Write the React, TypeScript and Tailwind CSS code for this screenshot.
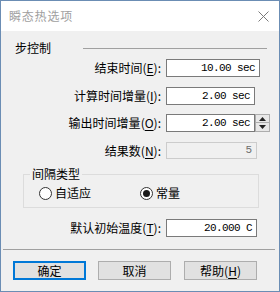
import React from "react";

const cjk = { fontFamily: '"Noto Sans CJK SC", "Noto Sans", sans-serif' };
const mono = { fontFamily: '"Liberation Mono", "DejaVu Sans Mono", monospace' };

function Label({ text, k }: { text: string; k: string }) {
  return (
    <div className="w-[160px] flex justify-end items-center text-[12px] leading-[16px] text-black">
      <span>{text}(</span>
      <span className="underline underline-offset-[2px]">{k}</span>
      <span>):</span>
    </div>
  );
}

function Field({ value, w }: { value: string; w: string }) {
  return (
    <div
      className={`${w} h-[18px] ml-[5px] border border-[#7a7a7a] bg-white flex items-center justify-end pr-[4px] text-[11px] tracking-[-0.6px] text-black`}
      style={mono}
    >
      {value}
    </div>
  );
}

function Radio({ checked, label }: { checked: boolean; label: string }) {
  return (
    <div className="flex items-center">
      <div className="w-[13px] h-[13px] rounded-full border border-[#333333] bg-white flex items-center justify-center">
        {checked && <div className="w-[7px] h-[7px] rounded-full bg-[#1a1a1a]" />}
      </div>
      <span className="ml-[3px] text-[12px] leading-[16px] text-black">{label}</span>
    </div>
  );
}

function Btn({ children, primary }: { children: React.ReactNode; primary?: boolean }) {
  return (
    <div
      className={`w-[73px] h-[19px] flex items-center justify-center bg-[#e1e1e1] text-[12px] leading-[16px] text-black ${
        primary ? "border-2 border-[#0078d7]" : "border border-[#adadad]"
      }`}
    >
      {children}
    </div>
  );
}

export default function App() {
  return (
    <div
      className="w-[280px] h-[292px] border border-[#6b8db4] flex flex-col bg-[#f0f0f0] overflow-hidden"
      style={cjk}
    >
      {/* title bar */}
      <div className="h-[30px] bg-white flex items-center justify-between pl-[8px] pr-[10px] shrink-0">
        <span className="text-[12px] leading-[16px] text-[#a0a0a0] tracking-[0.8px]">瞬态热选项</span>
        <svg width="11" height="11" viewBox="0 0 11 11">
          <path d="M0.5 0.5 L10.5 10.5 M10.5 0.5 L0.5 10.5" stroke="#7a7a7a" strokeWidth="1" />
        </svg>
      </div>

      {/* body */}
      <div className="flex flex-col pt-[9px]">
        <div className="h-[16px] flex items-center pl-[14px] pr-[12px]">
          <span className="text-[12px] leading-[16px] text-black">步控制</span>
          <div className="flex-1 ml-[32px] h-px bg-[#a0a0a0]" />
        </div>

        <div className="flex items-center mt-[3px]">
          <Label text="结束时间" k="E" />
          <Field value="10.00 sec" w="w-[94px]" />
        </div>
        <div className="flex items-center mt-[10px]">
          <Label text="计算时间增量" k="I" />
          <Field value="2.00 sec" w="w-[89px]" />
        </div>
        <div className="flex items-center mt-[9px]">
          <Label text="输出时间增量" k="O" />
          <Field value="2.00 sec" w="w-[89px]" />
          <div className="w-[15px] h-[18px] flex flex-col">
            <div className="h-[9px] border border-[#adadad] bg-[#e8e8e8] flex items-center justify-center">
              <svg width="7" height="4" viewBox="0 0 7 4">
                <path d="M3.5 0 L7 4 L0 4 Z" fill="#222" />
              </svg>
            </div>
            <div className="h-[9px] border border-t-0 border-[#adadad] bg-[#e8e8e8] flex items-center justify-center">
              <svg width="7" height="4" viewBox="0 0 7 4">
                <path d="M0 0 L7 0 L3.5 4 Z" fill="#222" />
              </svg>
            </div>
          </div>
        </div>
        <div className="flex items-center mt-[10px]">
          <Label text="结果数" k="N" />
          <div
            className="w-[91px] h-[17px] ml-[5px] border border-[#cccccc] bg-[#f0f0f0] flex items-center justify-end pr-[4px] text-[11px] text-[#6d6d6d]"
            style={mono}
          >
            5
          </div>
        </div>

        <fieldset className="ml-[22px] w-[236px] mt-[7px] border border-[#dcdcdc] pb-[6px]">
          <legend className="ml-[6px] px-[2px] text-[12px] leading-[16px] text-black">间隔类型</legend>
          <div className="flex items-center mt-[3px] pl-[15px]">
            <div className="w-[101px]">
              <Radio checked={false} label="自适应" />
            </div>
            <Radio checked={true} label="常量" />
          </div>
        </fieldset>

        <div className="flex items-center mt-[11px]">
          <Label text="默认初始温度" k="T" />
          <Field value="20.000 C" w="w-[91px]" />
        </div>

        <div className="ml-[2px] mr-[4px] mt-[12px] h-px bg-[#a0a0a0]" />

        <div className="flex items-center mt-[11px] pl-[12px]">
          <Btn primary>确定</Btn>
          <div className="ml-[12px]">
            <Btn>取消</Btn>
          </div>
          <div className="ml-[13px]">
            <Btn>
              帮助(<span className="underline underline-offset-[2px]">H</span>)
            </Btn>
          </div>
        </div>
      </div>
    </div>
  );
}
